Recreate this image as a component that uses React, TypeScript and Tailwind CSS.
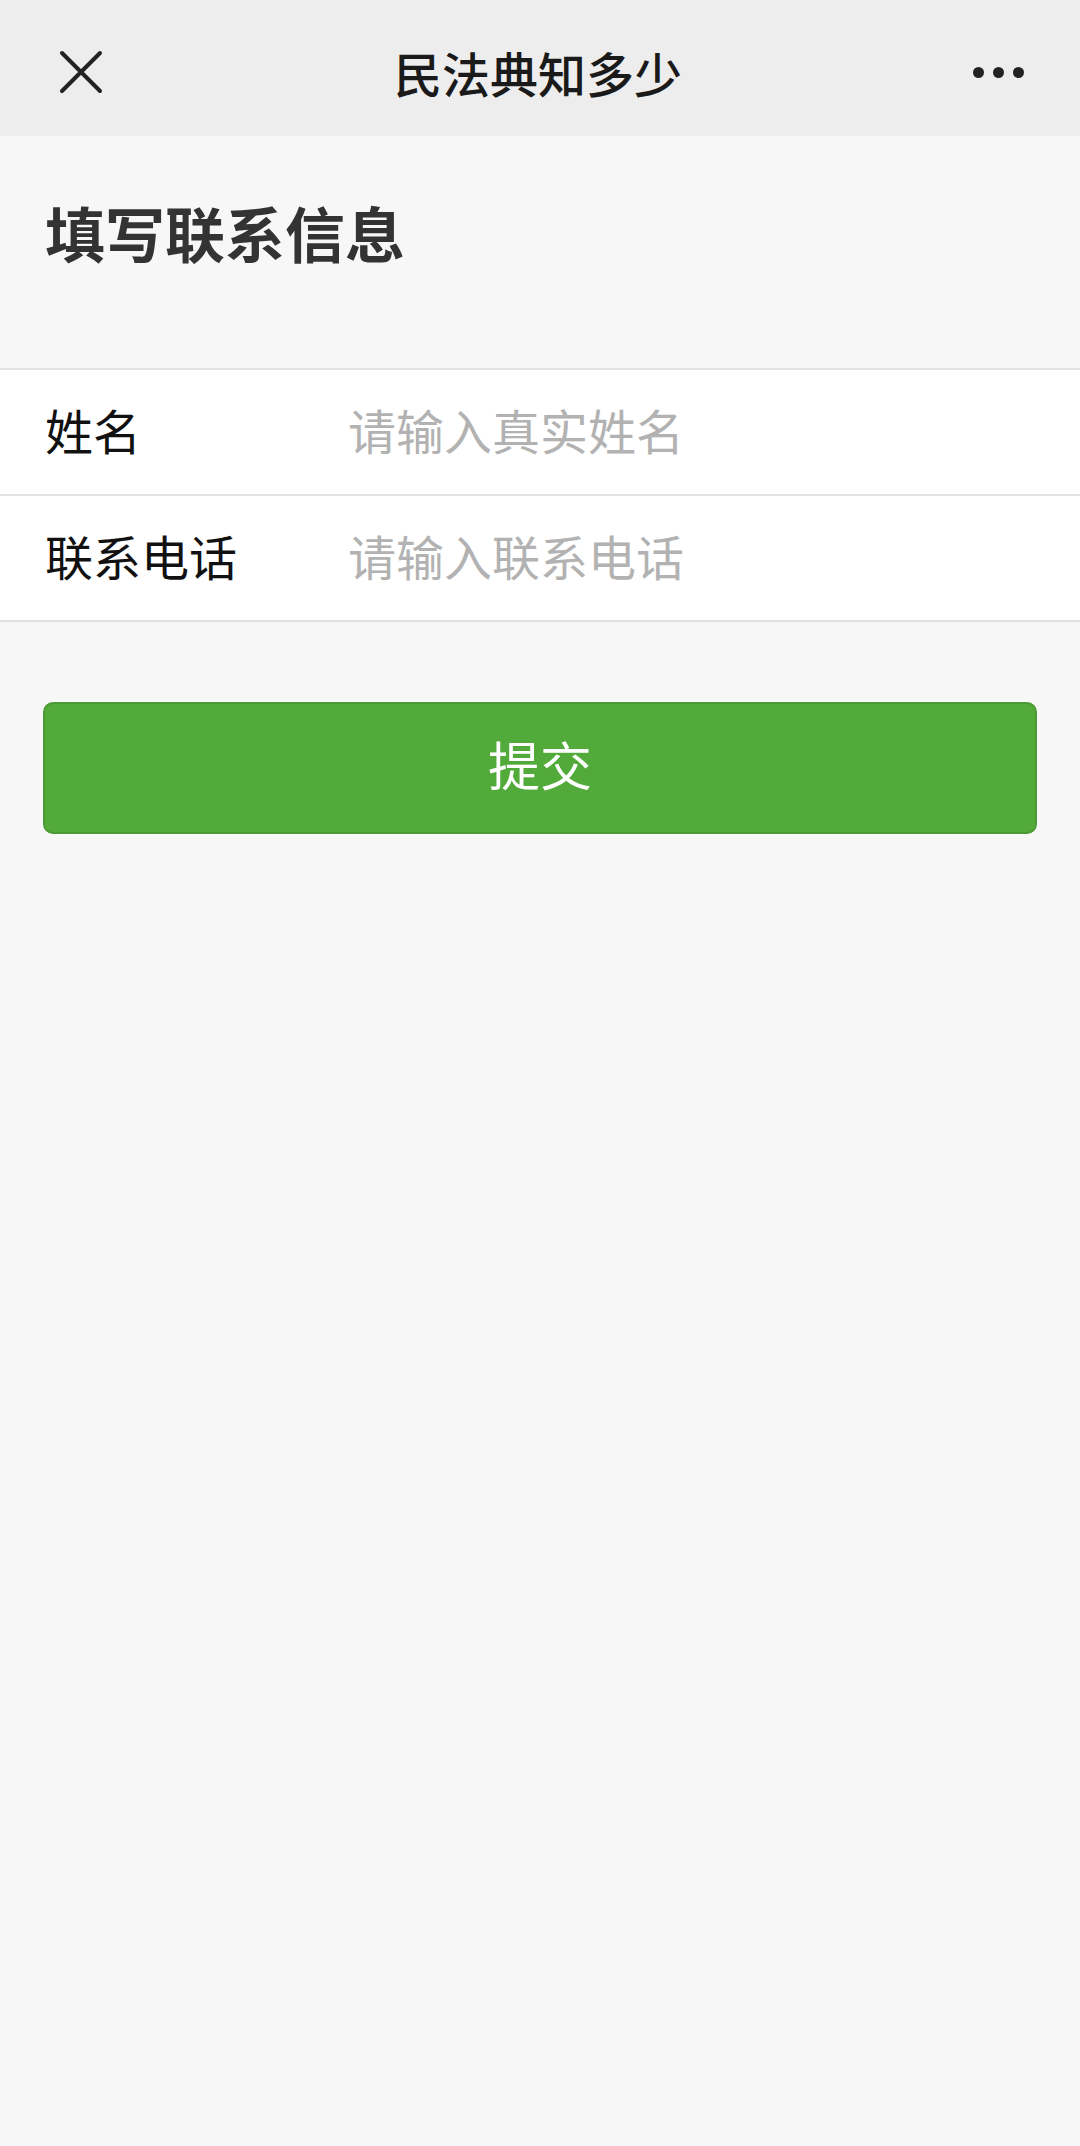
const font = { fontFamily: '"Noto Sans CJK SC", "Noto Sans", sans-serif' };

function CloseIcon() {
  return (
    <svg width="44" height="44" viewBox="0 0 44 44" fill="none">
      <path d="M3 3 L41 41 M41 3 L3 41" stroke="#222" strokeWidth="4" strokeLinecap="round" />
    </svg>
  );
}

function Field({ label, placeholder }: { label: string; placeholder: string }) {
  return (
    <div className="flex h-[126px] items-center border-b-2 border-[#e2e2e2] bg-white pb-[6px] pl-[45px]">
      <div className="w-[303px] text-[48px] leading-none text-[#111]">{label}</div>
      <input
        className="min-w-0 flex-1 bg-transparent text-[48px] leading-none text-[#111] outline-none placeholder:text-[#b2b2b2]"
        style={font}
        placeholder={placeholder}
      />
    </div>
  );
}

export default function App() {
  return (
    <div className="min-h-[2146px] w-[1080px] bg-[#f7f7f7]" style={font}>
      <header className="flex h-[136px] items-center justify-between bg-[#ededed] pl-[59px] pr-[56px] pt-[8px]">
        <CloseIcon />
        <h1 className="text-[48px] font-medium leading-none text-[#1a1a1a]">民法典知多少</h1>
        <div className="flex gap-[9px]">
          <span className="h-[11px] w-[11px] rounded-full bg-[#222]" />
          <span className="h-[11px] w-[11px] rounded-full bg-[#222]" />
          <span className="h-[11px] w-[11px] rounded-full bg-[#222]" />
        </div>
      </header>

      <div className="flex h-[234px] items-center border-b-2 border-[#e2e2e2] pl-[45px]">
        <h2 className="mb-[40px] text-[60px] font-bold leading-none text-[#333]">填写联系信息</h2>
      </div>

      <Field label="姓名" placeholder="请输入真实姓名" />
      <Field label="联系电话" placeholder="请输入联系电话" />

      <div className="px-[43px] pt-[80px]">
        <button className="flex h-[132px] w-full items-center justify-center rounded-[10px] border-2 border-[#4a9a36] bg-[#52aa3a] pb-[8px] text-[52px] leading-none text-white">
          提交
        </button>
      </div>
    </div>
  );
}
